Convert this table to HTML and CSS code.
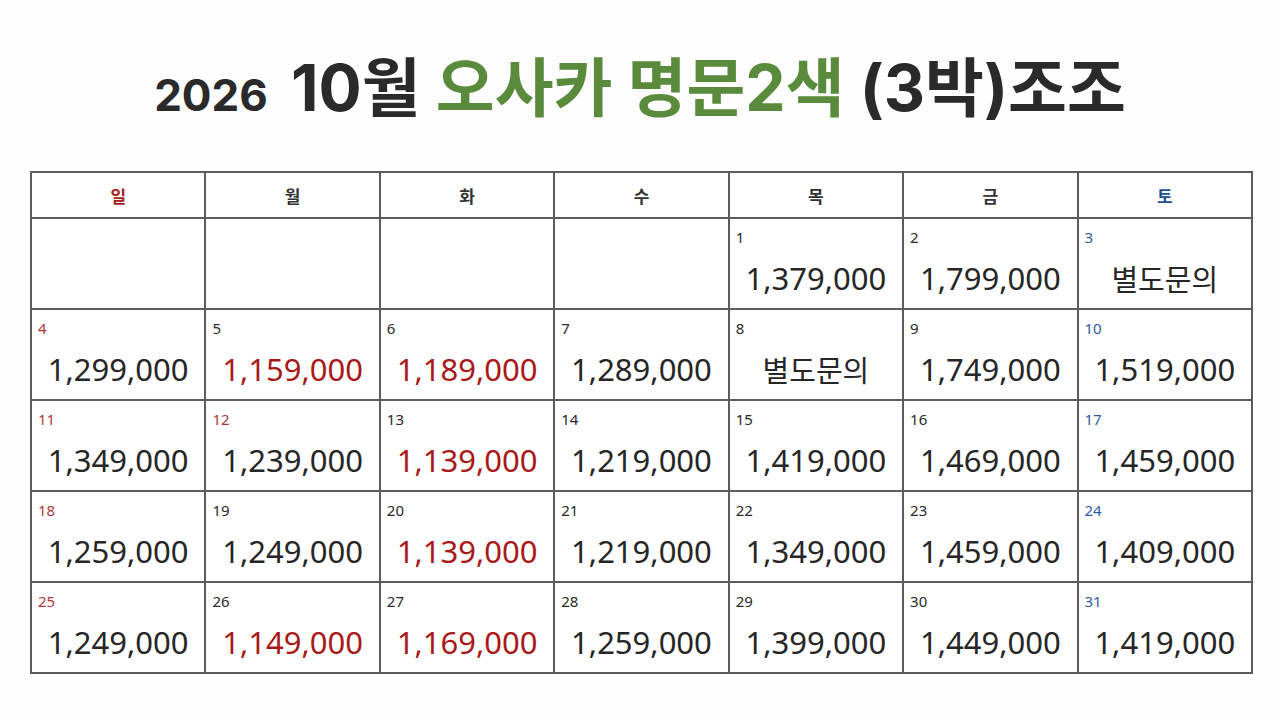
FILE: index.html
```html
<!DOCTYPE html>
<html lang="ko">
<head>
<meta charset="utf-8">
<link rel="stylesheet" href="styles.css">
</head>
<body>
<div class="page">
  <h1 class="title"><span class="year">2026</span> <span class="month">10월</span> <span class="green">오사카 명문2색</span> (3박)조조</h1>
  <table class="cal">
    <thead>
      <tr>
        <th class="sun">일</th><th>월</th><th>화</th><th>수</th><th>목</th><th>금</th><th class="sat">토</th>
      </tr>
    </thead>
    <tbody>
      <tr>
        <td></td><td></td><td></td><td></td>
        <td><div class="d">1</div><div class="p">1,379,000</div></td>
        <td><div class="d">2</div><div class="p">1,799,000</div></td>
        <td><div class="d sat">3</div><div class="p ko">별도문의</div></td>
      </tr>
      <tr>
        <td><div class="d sun">4</div><div class="p">1,299,000</div></td>
        <td><div class="d">5</div><div class="p red">1,159,000</div></td>
        <td><div class="d">6</div><div class="p red">1,189,000</div></td>
        <td><div class="d">7</div><div class="p">1,289,000</div></td>
        <td><div class="d">8</div><div class="p ko">별도문의</div></td>
        <td><div class="d">9</div><div class="p">1,749,000</div></td>
        <td><div class="d sat">10</div><div class="p">1,519,000</div></td>
      </tr>
      <tr>
        <td><div class="d sun">11</div><div class="p">1,349,000</div></td>
        <td><div class="d sun">12</div><div class="p">1,239,000</div></td>
        <td><div class="d">13</div><div class="p red">1,139,000</div></td>
        <td><div class="d">14</div><div class="p">1,219,000</div></td>
        <td><div class="d">15</div><div class="p">1,419,000</div></td>
        <td><div class="d">16</div><div class="p">1,469,000</div></td>
        <td><div class="d sat">17</div><div class="p">1,459,000</div></td>
      </tr>
      <tr>
        <td><div class="d sun">18</div><div class="p">1,259,000</div></td>
        <td><div class="d">19</div><div class="p">1,249,000</div></td>
        <td><div class="d">20</div><div class="p red">1,139,000</div></td>
        <td><div class="d">21</div><div class="p">1,219,000</div></td>
        <td><div class="d">22</div><div class="p">1,349,000</div></td>
        <td><div class="d">23</div><div class="p">1,459,000</div></td>
        <td><div class="d sat">24</div><div class="p">1,409,000</div></td>
      </tr>
      <tr>
        <td><div class="d sun">25</div><div class="p">1,249,000</div></td>
        <td><div class="d">26</div><div class="p red">1,149,000</div></td>
        <td><div class="d">27</div><div class="p red">1,169,000</div></td>
        <td><div class="d">28</div><div class="p">1,259,000</div></td>
        <td><div class="d">29</div><div class="p">1,399,000</div></td>
        <td><div class="d">30</div><div class="p">1,449,000</div></td>
        <td><div class="d sat">31</div><div class="p">1,419,000</div></td>
      </tr>
    </tbody>
  </table>
</div>
</body>
</html>
```

FILE: styles.css
```css
html, body {
  margin: 0;
  padding: 0;
  background: #fdfdfd;
}
.page {
  width: 1280px;
  height: 720px;
  padding-top: 48px;
  box-sizing: border-box;
  font-family: "Noto Sans CJK KR", "Noto Sans", sans-serif;
  color: #222;
}
.title {
  margin: 0 0 43px 0;
  height: 80px;
  text-align: center;
  font-family: "Inter", "Noto Sans CJK KR", sans-serif;
  font-weight: 700;
  font-size: 64px;
  line-height: 80px;
  color: #2a2a2a;
  white-space: nowrap;
}
.title .year {
  font-size: 44px;
  line-height: 1;
  margin-right: 8px;
}
.title .green {
  color: #5a8a3c;
}
.cal {
  margin-left: 30px;
  width: 1223px;
  border-collapse: collapse;
  table-layout: fixed;
  background: #fefefe;
}
.cal th, .cal td {
  border: 2px solid #5c5c5c;
  padding: 0;
}
.cal th {
  height: 44px;
  font-size: 17px;
  font-weight: 700;
  color: #333;
  font-family: "Noto Sans CJK KR", sans-serif;
}
.cal td {
  height: 89px;
  vertical-align: top;
}
.cal th.sun { color: #a52222; }
.cal th.sat { color: #1f4f94; }
.d {
  font-family: "Noto Sans", "Open Sans", sans-serif;
  font-size: 15px;
  line-height: 18px;
  color: #2a2a2a;
  padding: 9px 0 0 6px;
}
.d.sun { color: #a83a3a; }
.d.sat { color: #2e5e9e; }
.p {
  font-family: "Noto Sans", "Open Sans", sans-serif;
  font-size: 31px;
  line-height: 42px;
  text-align: center;
  color: #262626;
  margin-top: 11px;
}
.p.red { color: #a81a1a; }
.p.ko {
  font-family: "Noto Sans CJK KR", sans-serif;
  font-size: 29px;
}
```
